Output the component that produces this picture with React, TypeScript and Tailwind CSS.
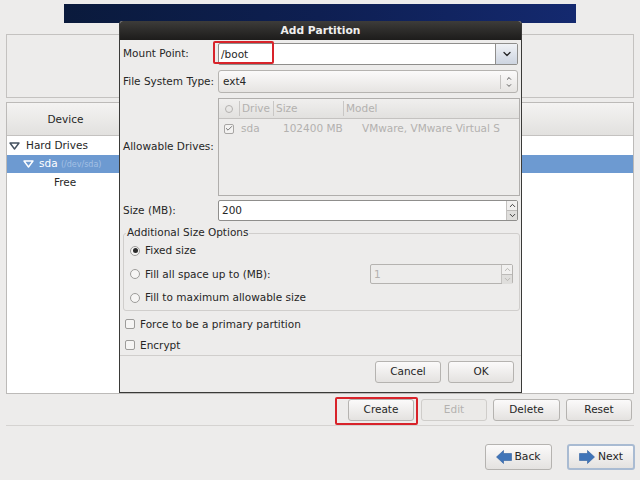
import { Check, ChevronDown, ChevronUp } from 'lucide-react';

function Btn({ label, className = '', disabled = false }: { label: string; className?: string; disabled?: boolean }) {
    return (
        <div
            className={`h-[22px] flex items-center justify-center rounded-[3px] border border-[#b5b3b0] bg-gradient-to-b from-[#fbfafa] to-[#e4e2e0] text-[10.5px] ${disabled ? 'text-[#b4b2b0] bg-none bg-[#ebeae8] border-[#cfcdca]' : 'text-[#262626]'} ${className}`}
        >
            {label}
        </div>
    );
}

function Radio({ label, checked = false }: { label: string; checked?: boolean }) {
    return (
        <div className="flex items-center gap-[5px] whitespace-nowrap">
            <span className="w-[10px] h-[10px] rounded-full border border-[#9d9c9a] bg-[#f6f5f4] flex items-center justify-center">
                {checked && <span className="w-[5px] h-[5px] rounded-full bg-[#2a2a2a]" />}
            </span>
            <span>{label}</span>
        </div>
    );
}

function CheckRow({ label }: { label: string }) {
    return (
        <div className="flex items-center gap-[5px] pl-[5px] whitespace-nowrap">
            <span className="w-[10px] h-[10px] rounded-[2px] border border-[#9d9c9a] bg-[#f6f5f4]" />
            <span>{label}</span>
        </div>
    );
}

function Stepper({ faded = false }: { faded?: boolean }) {
    const color = faded ? 'text-[#b5b3b0]' : 'text-[#333]';
    return (
        <div className={`w-[11px] h-full flex flex-col border-l border-[#c4c2c0] ${color}`}>
            <div className="flex-1 flex items-center justify-center bg-[#f1f0ef] border-b border-[#bcbab8]">
                <ChevronUp size={9} strokeWidth={2.5} />
            </div>
            <div className="flex-1 flex items-center justify-center bg-[#dfdedc]">
                <ChevronDown size={9} strokeWidth={2.5} />
            </div>
        </div>
    );
}

function TreeArrow({ light = false }: { light?: boolean }) {
    return (
        <svg width="11" height="8" viewBox="0 0 11 8" className="shrink-0">
            <path d="M1 1 L10 1 L5.5 7 Z" fill={light ? '#6d9ad1' : '#ffffff'} stroke={light ? '#ffffff' : '#44515f'} strokeWidth="1.4" strokeLinejoin="round" />
        </svg>
    );
}

function NavArrow({ flip = false }: { flip?: boolean }) {
    return (
        <svg width="16" height="14" viewBox="0 0 16 14" className={flip ? 'scale-x-[-1]' : ''}>
            <path d="M0.5 7 L7.5 0.5 L7.5 3.5 L15.5 3.5 L15.5 10.5 L7.5 10.5 L7.5 13.5 Z" fill="#3f74b8" stroke="#2f5f9f" strokeWidth="0.6" />
        </svg>
    );
}

function AddPartitionDialog() {
    return (
        <div className="absolute left-[119px] top-[21px] w-[403px] h-[372px] bg-[#edeceb] border border-[#3a3a38] border-t-0 rounded-t-[3px] text-[10.5px] text-[#262626] flex flex-col">
            <div className="h-[19px] shrink-0 rounded-t-[3px] bg-gradient-to-b from-[#3d3c3a] to-[#1d1c1b] flex items-center justify-center text-[10.7px] font-bold text-[#f0efee] pt-[2px]">
                Add Partition
            </div>

            <div className="h-[3px] shrink-0" />
            <div className="flex items-center h-[22px] pl-[3px] pr-[3px] shrink-0 whitespace-nowrap">
                <span className="w-[95px]">Mount Point:</span>
                <div className="flex-1 h-[22px] flex border border-[#8f8e8c] rounded-[2px] bg-white">
                    <span className="flex-1 pl-[2px] leading-[20px]">/boot</span>
                    <div className="w-[22px] flex items-center justify-center border-l border-[#8f8e8c] bg-gradient-to-b from-[#f0f2f6] to-[#cdd4e0]">
                        <ChevronDown size={12} strokeWidth={2.5} />
                    </div>
                </div>
            </div>

            <div className="h-[5px] shrink-0" />
            <div className="flex items-center h-[23px] pl-[3px] pr-[3px] shrink-0 whitespace-nowrap">
                <span className="w-[95px]">File System Type:</span>
                <div className="flex-1 h-[23px] flex items-center rounded-[3px] border border-[#b5b3b0] bg-gradient-to-b from-[#fbfafa] to-[#e6e4e2] pl-[4px]">
                    <span className="flex-1">ext4</span>
                    <div className="w-[17px] h-[14px] border-l border-[#c4c2c0] flex flex-col items-center justify-center">
                        <ChevronUp size={8} strokeWidth={2.5} />
                        <ChevronDown size={8} strokeWidth={2.5} />
                    </div>
                </div>
            </div>

            <div className="h-[5px] shrink-0" />
            <div className="flex items-center h-[98px] pl-[3px] pr-[1px] shrink-0 whitespace-nowrap">
                <span className="w-[95px]">Allowable Drives:</span>
                <div className="flex-1 h-full border border-[#b0aeac] text-[#b3b1af] flex flex-col">
                    <div className="h-[20px] flex items-center bg-gradient-to-b from-[#f0efee] to-[#e2e1df] border-b border-[#c4c2c0]">
                        <span className="w-[20px] flex justify-center">
                            <span className="w-[8px] h-[8px] rounded-full border border-[#b3b1af]" />
                        </span>
                        <span className="w-[34px] border-l border-[#c9c7c5] pl-[2px]">Drive</span>
                        <span className="w-[70px] border-l border-[#c9c7c5] pl-[2px]">Size</span>
                        <span className="border-l border-[#c9c7c5] pl-[2px]">Model</span>
                    </div>
                    <div className="h-[19px] flex items-center">
                        <span className="w-[20px] flex justify-center">
                            <span className="w-[10px] h-[10px] rounded-[2px] border border-[#a8a6a4] bg-[#f3f2f1] flex items-center justify-center text-[#777]">
                                <Check size={9} strokeWidth={3} />
                            </span>
                        </span>
                        <span className="w-[44px] pl-[2px]">sda</span>
                        <span className="w-[79px]">102400 MB</span>
                        <span>VMware, VMware Virtual S</span>
                    </div>
                </div>
            </div>

            <div className="h-[4px] shrink-0" />
            <div className="flex items-center h-[21px] pl-[3px] pr-[3px] shrink-0">
                <span className="w-[95px]">Size (MB):</span>
                <div className="flex-1 h-[21px] flex border border-[#8f8e8c] rounded-[2px] bg-white">
                    <span className="flex-1 pl-[3px] leading-[19px]">200</span>
                    <Stepper />
                </div>
            </div>

            <div className="relative mt-[12px] ml-[3px] mr-[1px] h-[78px] shrink-0 border border-[#d0cecc] rounded-[3px]">
                <span className="absolute left-[2px] top-[-9px] bg-[#edeceb] leading-[14px] px-[1px] whitespace-nowrap">Additional Size Options</span>
                <div className="pl-[6px] pt-[9px] flex flex-col gap-[8px] leading-[15.5px]">
                    <Radio label="Fixed size" checked />
                    <div className="flex items-center justify-between pr-[6px] h-[15.5px]">
                        <Radio label="Fill all space up to (MB):" />
                        <div className="w-[143px] h-[20px] flex border border-[#b5b3b0] rounded-[2px] text-[#b3b1af]">
                            <span className="flex-1 pl-[3px] leading-[18px]">1</span>
                            <Stepper faded />
                        </div>
                    </div>
                    <Radio label="Fill to maximum allowable size" />
                </div>
            </div>

            <div className="flex flex-col gap-[7px] pt-[6px] leading-[14px] shrink-0">
                <CheckRow label="Force to be a primary partition" />
                <CheckRow label="Encrypt" />
            </div>

            <div className="mt-[3px] border-t border-[#d0cecc] flex justify-end gap-[7px] pt-[5px] pr-[7px]">
                <Btn label="Cancel" className="w-[66px]" />
                <Btn label="OK" className="w-[66px]" />
            </div>
        </div>
    );
}

export default function App() {
    return (
        <div className="relative w-[640px] h-[480px] overflow-hidden bg-[#edeceb] font-['DejaVu_Sans',sans-serif] text-[10.5px] text-[#262626]">
            <div className="h-[4px]" />
            <div className="mx-[64px] h-[19px] bg-gradient-to-r from-[#0a1a3c] via-[#0e1f52] to-[#14296f]" />

            <div className="mx-[6px] mt-[11px] h-[64px] border border-[#c4c2c0]" />

            {/* device list */}
            <div className="mx-[6px] mt-[4px] h-[292px] border border-[#bcbab8] bg-white flex flex-col">
                <div className="h-[33px] shrink-0 bg-gradient-to-b from-[#f4f3f2] to-[#e2e1df] border-b border-[#c4c2c0] flex items-center pt-[2px]">
                    <span className="w-[117px] text-center">Device</span>
                </div>
                <div className="h-[19px] flex items-center gap-[6px] pl-[2px] pt-[1px]">
                    <TreeArrow />
                    <span>Hard Drives</span>
                </div>
                <div className="h-[18px] flex items-center bg-[#6d9ad1] text-white pl-[16px] gap-[5px]">
                    <TreeArrow light />
                    <span>sda <span className="text-[8px] text-[#a4c0e4]">(/dev/sda)</span></span>
                </div>
                <div className="h-[19px] flex items-center pl-[47px] pt-[1px]">Free</div>
            </div>

            <div className="mt-[5px] flex justify-end pr-[8px]">
                <Btn label="Create" className="w-[66px] mr-[7px]" />
                <Btn label="Edit" className="w-[66px] mr-[6px]" disabled />
                <Btn label="Delete" className="w-[67px] mr-[6px]" />
                <Btn label="Reset" className="w-[66px]" />
            </div>

            <div className="mx-[6px] mt-[4px] w-[628px] border-t border-[#d5d3d1]" />

            <div className="mt-[18px] flex justify-end gap-[15px] pr-[5px]">
                <div className="w-[67px] h-[26px] flex items-center justify-center gap-[2px] rounded-[3px] border border-[#b5b3b0] bg-gradient-to-b from-[#fbfafa] to-[#e4e2e0] text-[10.8px]">
                    <NavArrow />
                    <span>Back</span>
                </div>
                <div className="w-[68px] h-[26px] flex items-center justify-center gap-[3px] rounded-[3px] border-2 border-[#a9bbd2] bg-gradient-to-b from-[#fbfafa] to-[#e4e2e0] text-[10.8px]">
                    <NavArrow flip />
                    <span>Next</span>
                </div>
            </div>

            <AddPartitionDialog />

            {/* red callouts */}
            <div className="absolute left-[213px] top-[41px] w-[61px] h-[23px] border-2 border-[#d8232a] rounded-[2px]" />
            <div className="absolute left-[335px] top-[397px] w-[83px] h-[28px] border-2 border-[#d8232a] rounded-[2px]" />
        </div>
    );
}
